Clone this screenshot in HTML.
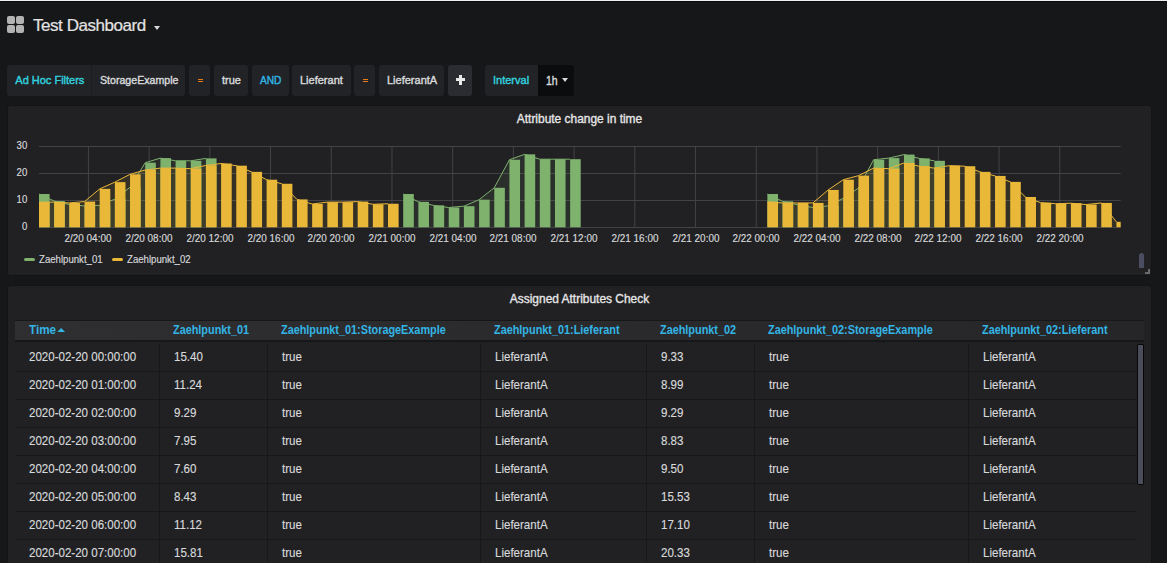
<!DOCTYPE html>
<html><head><meta charset="utf-8"><style>
*{box-sizing:border-box;margin:0;padding:0}
html,body{width:1167px;height:563px;overflow:hidden;background:#161719;font-family:"Liberation Sans",sans-serif;color:#d8d9da}
.topline{position:absolute;left:0;top:0;width:1167px;height:1px;background:#eef0f4}
.topline2{position:absolute;left:0;top:1px;width:1167px;height:1px;background:#0b0c0e}
.icon{position:absolute;left:7px;top:16px;width:17px;height:17px}
.icon i{position:absolute;width:8px;height:8px;background:#b3b3b3;border-radius:2px}
.title{position:absolute;left:33px;top:14px;font-size:17px;line-height:24px;color:#e3e3e3;white-space:nowrap;letter-spacing:-0.45px;-webkit-text-stroke:0.2px #e3e3e3}
.caret{position:absolute;left:153.5px;top:25.5px;width:0;height:0;border-left:3.5px solid transparent;border-right:3.5px solid transparent;border-top:4px solid #d8d9da}
.lbl{position:absolute;top:65px;height:31px;line-height:31px;font-size:11px;padding:0 8px;background:#212327;border-radius:3px;white-space:nowrap;color:#d8d9da;-webkit-text-stroke:0.4px currentColor}
.var{color:#32d1df}
.eq{position:absolute;top:78.7px;width:5.6px;height:3.6px;border-top:1.3px solid #eb7b18;border-bottom:1.3px solid #eb7b18}
.sx{display:inline-block;transform-origin:0 50%}
.kw{color:#33b5e5}
.op{color:#eb7b18}
.panel{position:absolute;left:7px;width:1145px;background:#212124;border:1px solid #141414;border-radius:3px}
.ptitle{position:absolute;left:0;width:100%;text-align:center;font-size:12.5px;color:#e6e6e6;white-space:nowrap;transform:scaleX(0.955);-webkit-text-stroke:0.35px #e6e6e6}
.plot{position:absolute;left:0;top:0}
.xl{position:absolute;top:231.6px;width:80px;text-align:center;font-size:10px;line-height:13px;color:#d8d9da;white-space:nowrap;-webkit-text-stroke:0.15px #d8d9da;transform:scaleX(0.99)}
.yl{position:absolute;left:0;width:27.3px;text-align:right;font-size:10px;line-height:12px;color:#d8d9da;-webkit-text-stroke:0.15px #d8d9da;transform:scaleX(0.96);transform-origin:100% 50%}
.leg{position:absolute;top:253.1px;font-size:10px;line-height:13px;color:#d8d9da;white-space:nowrap;-webkit-text-stroke:0.15px #d8d9da;transform:scaleX(0.962);transform-origin:0 50%}
.sw{position:absolute;top:257.8px;width:10.5px;height:3.2px;border-radius:1.5px}
.thead{position:absolute;left:15px;top:319.5px;width:1129px;height:22px;background:linear-gradient(135deg,#2f2f32,#262628);border-top:1.5px solid #161719;border-bottom:2px solid #161719}
.th{position:absolute;top:320.5px;line-height:19px;font-size:12px;font-weight:bold;color:#33b5e5;white-space:nowrap;transform:scaleX(0.905);transform-origin:0 50%}
.sortc{display:inline-block;margin-left:1.3px;vertical-align:2px;width:0;height:0;border-left:4px solid transparent;border-right:4px solid transparent;border-bottom:4.5px solid #33b5e5}
.tr{position:absolute;left:0;width:1167px;height:28px}
.td{position:absolute;top:0;line-height:27px;font-size:12.75px;transform:scaleX(0.905);transform-origin:0 50%;-webkit-text-stroke:0.15px #d8d9da;color:#d8d9da;white-space:nowrap}
.hsep{position:absolute;left:15px;width:1121px;height:1px;background:#18181a}
.vsep{position:absolute;top:343.5px;width:1px;height:230px;background:#18181a}
.sb{position:absolute;left:1137px;top:343.8px;width:7px;height:140.8px;background:#4b4d5a;border:1.2px solid #060607;border-radius:1px}
</style></head><body>
<div class="topline"></div><div class="topline2"></div>
<div class="icon"><i style="left:0;top:0"></i><i style="left:9px;top:0"></i><i style="left:0;top:9px"></i><i style="left:9px;top:9px"></i></div>
<div class="title">Test Dashboard</div>
<div class="caret"></div>

<div class="lbl var" style="left:7.3px;width:84.2px;border-radius:3px 0 0 3px">Ad Hoc Filters</div>
<div class="lbl" style="left:91.5px;width:93.5px;border-radius:0 3px 3px 0"><span class="sx" style="transform:scaleX(0.965)">StorageExample</span></div>
<div style="position:absolute;left:91px;top:65px;width:1px;height:31px;background:#1c1d20"></div>
<div class="lbl op" style="left:189px;width:21px;padding:0"></div><div class="eq" style="left:197.6px"></div>
<div class="lbl" style="left:214px;width:34px">true</div>
<div class="lbl kw" style="left:252px;width:37px"><span class="sx" style="transform:scaleX(0.92)">AND</span></div>
<div class="lbl" style="left:292px;width:59px">Lieferant</div>
<div class="lbl op" style="left:354.3px;width:20.7px;padding:0"></div><div class="eq" style="left:362.7px"></div>
<div class="lbl" style="left:379px;width:65px">LieferantA</div>
<div class="lbl" style="left:448px;width:24px;background:#2b2c31;padding:0"><span style="position:absolute;left:7.5px;top:13.3px;width:9.5px;height:3px;background:#e8e8e8"></span><span style="position:absolute;left:10.75px;top:10px;width:3px;height:9.6px;background:#e8e8e8"></span></div>
<div class="lbl var" style="left:485px;width:53px;border-radius:3px 0 0 3px">Interval</div>
<div class="lbl" style="left:537.8px;width:36px;background:#0b0c0e;border-radius:0 3px 3px 0;font-size:12px"><span class="sx" style="transform:scaleX(0.87) translateY(1px)">1h</span></div>
<div style="position:absolute;left:561.8px;top:78px;width:0;height:0;border-left:3.2px solid transparent;border-right:3.2px solid transparent;border-top:4px solid #d8d9da"></div>

<div class="panel" style="top:105px;height:171px"></div>
<div class="ptitle" style="top:109.5px;left:8px;width:1143px;line-height:18px">Attribute change in time</div>
<svg class="plot" width="1167" height="563" viewBox="0 0 1167 563">
<defs><clipPath id="pc"><rect x="39" y="0" width="1081.7" height="227.5"/></clipPath></defs>
<line x1="39" y1="146.5" x2="1120.7" y2="146.5" stroke="#434346" stroke-width="1"/><line x1="39" y1="173.5" x2="1120.7" y2="173.5" stroke="#434346" stroke-width="1"/><line x1="39" y1="200.5" x2="1120.7" y2="200.5" stroke="#434346" stroke-width="1"/><line x1="39" y1="227.5" x2="1120.7" y2="227.5" stroke="#434346" stroke-width="1"/><line x1="88.43" y1="146.5" x2="88.43" y2="227.5" stroke="#434346" stroke-width="1"/><line x1="149.14" y1="146.5" x2="149.14" y2="227.5" stroke="#434346" stroke-width="1"/><line x1="209.85" y1="146.5" x2="209.85" y2="227.5" stroke="#434346" stroke-width="1"/><line x1="270.56" y1="146.5" x2="270.56" y2="227.5" stroke="#434346" stroke-width="1"/><line x1="331.27" y1="146.5" x2="331.27" y2="227.5" stroke="#434346" stroke-width="1"/><line x1="391.98" y1="146.5" x2="391.98" y2="227.5" stroke="#434346" stroke-width="1"/><line x1="452.69" y1="146.5" x2="452.69" y2="227.5" stroke="#434346" stroke-width="1"/><line x1="513.40" y1="146.5" x2="513.40" y2="227.5" stroke="#434346" stroke-width="1"/><line x1="574.11" y1="146.5" x2="574.11" y2="227.5" stroke="#434346" stroke-width="1"/><line x1="634.82" y1="146.5" x2="634.82" y2="227.5" stroke="#434346" stroke-width="1"/><line x1="695.53" y1="146.5" x2="695.53" y2="227.5" stroke="#434346" stroke-width="1"/><line x1="756.24" y1="146.5" x2="756.24" y2="227.5" stroke="#434346" stroke-width="1"/><line x1="816.95" y1="146.5" x2="816.95" y2="227.5" stroke="#434346" stroke-width="1"/><line x1="877.66" y1="146.5" x2="877.66" y2="227.5" stroke="#434346" stroke-width="1"/><line x1="938.37" y1="146.5" x2="938.37" y2="227.5" stroke="#434346" stroke-width="1"/><line x1="999.08" y1="146.5" x2="999.08" y2="227.5" stroke="#434346" stroke-width="1"/><line x1="1059.79" y1="146.5" x2="1059.79" y2="227.5" stroke="#434346" stroke-width="1"/>
<g clip-path="url(#pc)">
<path d="M39.00,227.5 L39.00,194.02 L54.17,201.04 L69.35,204.55 L84.53,205.90 L99.70,205.36 L114.88,199.15 L130.05,187.27 L145.23,162.70 L160.40,158.11 L175.58,160.81 L190.75,160.81 L205.93,158.38 L205.93,227.5 Z" fill="#7eb26d" fill-opacity="0.1"/>
<path d="M39.00,194.02 L54.17,201.04 L69.35,204.55 L84.53,205.90 L99.70,205.36 L114.88,199.15 L130.05,187.27 L145.23,162.70 L160.40,158.11 L175.58,160.81 L190.75,160.81 L205.93,158.38" fill="none" stroke="#7eb26d" stroke-width="1"/>
<path d="M403.20,227.5 L403.20,194.02 L418.38,201.85 L433.55,205.36 L448.73,207.52 L463.90,206.17 L479.08,199.69 L494.25,187.81 L509.43,159.73 L524.60,154.33 L539.78,159.19 L554.95,159.19 L570.12,159.19 L570.12,227.5 Z" fill="#7eb26d" fill-opacity="0.1"/>
<path d="M403.20,194.02 L418.38,201.85 L433.55,205.36 L448.73,207.52 L463.90,206.17 L479.08,199.69 L494.25,187.81 L509.43,159.73 L524.60,154.33 L539.78,159.19 L554.95,159.19 L570.12,159.19" fill="none" stroke="#7eb26d" stroke-width="1"/>
<path d="M767.40,227.5 L767.40,194.02 L782.58,201.31 L797.75,204.82 L812.93,207.52 L828.10,205.90 L843.28,198.34 L858.45,188.08 L873.62,159.73 L888.80,158.11 L903.98,154.60 L919.15,158.38 L934.33,160.81 L934.33,227.5 Z" fill="#7eb26d" fill-opacity="0.1"/>
<path d="M767.40,194.02 L782.58,201.31 L797.75,204.82 L812.93,207.52 L828.10,205.90 L843.28,198.34 L858.45,188.08 L873.62,159.73 L888.80,158.11 L903.98,154.60 L919.15,158.38 L934.33,160.81" fill="none" stroke="#7eb26d" stroke-width="1"/>
<rect x="39.00" y="194.02" width="10.6" height="33.48" fill="#7eb26d"/>
<rect x="54.17" y="201.04" width="10.6" height="26.46" fill="#7eb26d"/>
<rect x="69.35" y="204.55" width="10.6" height="22.95" fill="#7eb26d"/>
<rect x="84.53" y="205.90" width="10.6" height="21.60" fill="#7eb26d"/>
<rect x="99.70" y="205.36" width="10.6" height="22.14" fill="#7eb26d"/>
<rect x="114.88" y="199.15" width="10.6" height="28.35" fill="#7eb26d"/>
<rect x="130.05" y="187.27" width="10.6" height="40.23" fill="#7eb26d"/>
<rect x="145.23" y="162.70" width="10.6" height="64.80" fill="#7eb26d"/>
<rect x="160.40" y="158.11" width="10.6" height="69.39" fill="#7eb26d"/>
<rect x="175.58" y="160.81" width="10.6" height="66.69" fill="#7eb26d"/>
<rect x="190.75" y="160.81" width="10.6" height="66.69" fill="#7eb26d"/>
<rect x="205.93" y="158.38" width="10.6" height="69.12" fill="#7eb26d"/>
<rect x="403.20" y="194.02" width="10.6" height="33.48" fill="#7eb26d"/>
<rect x="418.38" y="201.85" width="10.6" height="25.65" fill="#7eb26d"/>
<rect x="433.55" y="205.36" width="10.6" height="22.14" fill="#7eb26d"/>
<rect x="448.73" y="207.52" width="10.6" height="19.98" fill="#7eb26d"/>
<rect x="463.90" y="206.17" width="10.6" height="21.33" fill="#7eb26d"/>
<rect x="479.08" y="199.69" width="10.6" height="27.81" fill="#7eb26d"/>
<rect x="494.25" y="187.81" width="10.6" height="39.69" fill="#7eb26d"/>
<rect x="509.43" y="159.73" width="10.6" height="67.77" fill="#7eb26d"/>
<rect x="524.60" y="154.33" width="10.6" height="73.17" fill="#7eb26d"/>
<rect x="539.78" y="159.19" width="10.6" height="68.31" fill="#7eb26d"/>
<rect x="554.95" y="159.19" width="10.6" height="68.31" fill="#7eb26d"/>
<rect x="570.12" y="159.19" width="10.6" height="68.31" fill="#7eb26d"/>
<rect x="767.40" y="194.02" width="10.6" height="33.48" fill="#7eb26d"/>
<rect x="782.58" y="201.31" width="10.6" height="26.19" fill="#7eb26d"/>
<rect x="797.75" y="204.82" width="10.6" height="22.68" fill="#7eb26d"/>
<rect x="812.93" y="207.52" width="10.6" height="19.98" fill="#7eb26d"/>
<rect x="828.10" y="205.90" width="10.6" height="21.60" fill="#7eb26d"/>
<rect x="843.28" y="198.34" width="10.6" height="29.16" fill="#7eb26d"/>
<rect x="858.45" y="188.08" width="10.6" height="39.42" fill="#7eb26d"/>
<rect x="873.62" y="159.73" width="10.6" height="67.77" fill="#7eb26d"/>
<rect x="888.80" y="158.11" width="10.6" height="69.39" fill="#7eb26d"/>
<rect x="903.98" y="154.60" width="10.6" height="72.90" fill="#7eb26d"/>
<rect x="919.15" y="158.38" width="10.6" height="69.12" fill="#7eb26d"/>
<rect x="934.33" y="160.81" width="10.6" height="66.69" fill="#7eb26d"/>
<path d="M39.00,227.5 L39.00,202.12 L54.17,202.12 L69.35,202.93 L84.53,201.58 L99.70,188.89 L114.88,182.14 L130.05,174.31 L145.23,169.99 L160.40,168.10 L175.58,168.10 L190.75,168.64 L205.93,165.40 L221.10,163.51 L236.28,165.67 L251.45,171.88 L266.62,179.71 L281.80,183.76 L296.98,199.42 L312.15,204.01 L327.32,202.12 L342.50,202.12 L357.68,201.58 L372.85,204.28 L388.03,203.74 L388.03,227.5 Z" fill="#eab839" fill-opacity="0.1"/>
<path d="M39.00,202.12 L54.17,202.12 L69.35,202.93 L84.53,201.58 L99.70,188.89 L114.88,182.14 L130.05,174.31 L145.23,169.99 L160.40,168.10 L175.58,168.10 L190.75,168.64 L205.93,165.40 L221.10,163.51 L236.28,165.67 L251.45,171.88 L266.62,179.71 L281.80,183.76 L296.98,199.42 L312.15,204.01 L327.32,202.12 L342.50,202.12 L357.68,201.58 L372.85,204.28 L388.03,203.74" fill="none" stroke="#eab839" stroke-width="1"/>
<path d="M767.40,227.5 L767.40,201.85 L782.58,202.93 L797.75,202.93 L812.93,202.93 L828.10,189.97 L843.28,179.71 L858.45,175.66 L873.62,168.10 L888.80,168.64 L903.98,162.97 L919.15,166.21 L934.33,168.10 L949.50,165.67 L964.68,166.21 L979.85,171.88 L995.03,175.93 L1010.20,181.87 L1025.38,196.99 L1040.55,202.66 L1055.72,203.74 L1070.90,203.20 L1086.08,204.55 L1101.25,202.93 L1116.42,221.83 L1116.42,227.5 Z" fill="#eab839" fill-opacity="0.1"/>
<path d="M767.40,201.85 L782.58,202.93 L797.75,202.93 L812.93,202.93 L828.10,189.97 L843.28,179.71 L858.45,175.66 L873.62,168.10 L888.80,168.64 L903.98,162.97 L919.15,166.21 L934.33,168.10 L949.50,165.67 L964.68,166.21 L979.85,171.88 L995.03,175.93 L1010.20,181.87 L1025.38,196.99 L1040.55,202.66 L1055.72,203.74 L1070.90,203.20 L1086.08,204.55 L1101.25,202.93 L1116.42,221.83" fill="none" stroke="#eab839" stroke-width="1"/>
<rect x="39.00" y="202.12" width="10.6" height="25.38" fill="#eab839"/>
<rect x="54.17" y="202.12" width="10.6" height="25.38" fill="#eab839"/>
<rect x="69.35" y="202.93" width="10.6" height="24.57" fill="#eab839"/>
<rect x="84.53" y="201.58" width="10.6" height="25.92" fill="#eab839"/>
<rect x="99.70" y="188.89" width="10.6" height="38.61" fill="#eab839"/>
<rect x="114.88" y="182.14" width="10.6" height="45.36" fill="#eab839"/>
<rect x="130.05" y="174.31" width="10.6" height="53.19" fill="#eab839"/>
<rect x="145.23" y="169.99" width="10.6" height="57.51" fill="#eab839"/>
<rect x="160.40" y="168.10" width="10.6" height="59.40" fill="#eab839"/>
<rect x="175.58" y="168.10" width="10.6" height="59.40" fill="#eab839"/>
<rect x="190.75" y="168.64" width="10.6" height="58.86" fill="#eab839"/>
<rect x="205.93" y="165.40" width="10.6" height="62.10" fill="#eab839"/>
<rect x="221.10" y="163.51" width="10.6" height="63.99" fill="#eab839"/>
<rect x="236.28" y="165.67" width="10.6" height="61.83" fill="#eab839"/>
<rect x="251.45" y="171.88" width="10.6" height="55.62" fill="#eab839"/>
<rect x="266.62" y="179.71" width="10.6" height="47.79" fill="#eab839"/>
<rect x="281.80" y="183.76" width="10.6" height="43.74" fill="#eab839"/>
<rect x="296.98" y="199.42" width="10.6" height="28.08" fill="#eab839"/>
<rect x="312.15" y="204.01" width="10.6" height="23.49" fill="#eab839"/>
<rect x="327.32" y="202.12" width="10.6" height="25.38" fill="#eab839"/>
<rect x="342.50" y="202.12" width="10.6" height="25.38" fill="#eab839"/>
<rect x="357.68" y="201.58" width="10.6" height="25.92" fill="#eab839"/>
<rect x="372.85" y="204.28" width="10.6" height="23.22" fill="#eab839"/>
<rect x="388.03" y="203.74" width="10.6" height="23.76" fill="#eab839"/>
<rect x="767.40" y="201.85" width="10.6" height="25.65" fill="#eab839"/>
<rect x="782.58" y="202.93" width="10.6" height="24.57" fill="#eab839"/>
<rect x="797.75" y="202.93" width="10.6" height="24.57" fill="#eab839"/>
<rect x="812.93" y="202.93" width="10.6" height="24.57" fill="#eab839"/>
<rect x="828.10" y="189.97" width="10.6" height="37.53" fill="#eab839"/>
<rect x="843.28" y="179.71" width="10.6" height="47.79" fill="#eab839"/>
<rect x="858.45" y="175.66" width="10.6" height="51.84" fill="#eab839"/>
<rect x="873.62" y="168.10" width="10.6" height="59.40" fill="#eab839"/>
<rect x="888.80" y="168.64" width="10.6" height="58.86" fill="#eab839"/>
<rect x="903.98" y="162.97" width="10.6" height="64.53" fill="#eab839"/>
<rect x="919.15" y="166.21" width="10.6" height="61.29" fill="#eab839"/>
<rect x="934.33" y="168.10" width="10.6" height="59.40" fill="#eab839"/>
<rect x="949.50" y="165.67" width="10.6" height="61.83" fill="#eab839"/>
<rect x="964.68" y="166.21" width="10.6" height="61.29" fill="#eab839"/>
<rect x="979.85" y="171.88" width="10.6" height="55.62" fill="#eab839"/>
<rect x="995.03" y="175.93" width="10.6" height="51.57" fill="#eab839"/>
<rect x="1010.20" y="181.87" width="10.6" height="45.63" fill="#eab839"/>
<rect x="1025.38" y="196.99" width="10.6" height="30.51" fill="#eab839"/>
<rect x="1040.55" y="202.66" width="10.6" height="24.84" fill="#eab839"/>
<rect x="1055.72" y="203.74" width="10.6" height="23.76" fill="#eab839"/>
<rect x="1070.90" y="203.20" width="10.6" height="24.30" fill="#eab839"/>
<rect x="1086.08" y="204.55" width="10.6" height="22.95" fill="#eab839"/>
<rect x="1101.25" y="202.93" width="10.6" height="24.57" fill="#eab839"/>
<rect x="1116.42" y="221.83" width="10.6" height="5.67" fill="#eab839"/>
</g>
</svg>
<div class="yl" style="top:221.2px">0</div><div class="yl" style="top:194.2px">10</div><div class="yl" style="top:167.2px">20</div><div class="yl" style="top:140.2px">30</div>
<div class="xl" style="left:48.43px">2/20 04:00</div><div class="xl" style="left:109.14px">2/20 08:00</div><div class="xl" style="left:169.85px">2/20 12:00</div><div class="xl" style="left:230.56px">2/20 16:00</div><div class="xl" style="left:291.27px">2/20 20:00</div><div class="xl" style="left:351.98px">2/21 00:00</div><div class="xl" style="left:412.69px">2/21 04:00</div><div class="xl" style="left:473.40px">2/21 08:00</div><div class="xl" style="left:534.11px">2/21 12:00</div><div class="xl" style="left:594.82px">2/21 16:00</div><div class="xl" style="left:655.53px">2/21 20:00</div><div class="xl" style="left:716.24px">2/22 00:00</div><div class="xl" style="left:776.95px">2/22 04:00</div><div class="xl" style="left:837.66px">2/22 08:00</div><div class="xl" style="left:898.37px">2/22 12:00</div><div class="xl" style="left:959.08px">2/22 16:00</div><div class="xl" style="left:1019.79px">2/22 20:00</div>
<div class="sw" style="left:24.2px;background:#7eb26d"></div>
<div class="leg" style="left:38.8px">Zaehlpunkt_01</div>
<div class="sw" style="left:112px;background:#eab839"></div>
<div class="leg" style="left:127px">Zaehlpunkt_02</div>
<div style="position:absolute;left:1139px;top:253px;width:5px;height:15px;background:#4b4e60;border-radius:2.5px 2.5px 0 0"></div>
<div style="position:absolute;left:1145px;top:272px;width:5px;height:2px;background:#6a6a6a"></div>
<div style="position:absolute;left:1148px;top:269px;width:2px;height:5px;background:#6a6a6a"></div>

<div class="panel" style="top:285px;height:290px"></div>
<div class="hsep" style="top:370.55px"></div><div class="hsep" style="top:398.60px"></div><div class="hsep" style="top:426.65px"></div><div class="hsep" style="top:454.70px"></div><div class="hsep" style="top:482.75px"></div><div class="hsep" style="top:510.80px"></div><div class="hsep" style="top:538.85px"></div>
<div class="vsep" style="left:159.0px"></div><div class="vsep" style="left:267.0px"></div><div class="vsep" style="left:480.2px"></div><div class="vsep" style="left:646.2px"></div><div class="vsep" style="left:754.1px"></div><div class="vsep" style="left:968.3px"></div>
<div class="ptitle" style="top:289.5px;left:8px;width:1143px;line-height:18px">Assigned Attributes Check</div>
<div class="thead"></div>
<div class="th" style="left:29.2px;transform:scaleX(0.975)">Time<span class=sortc></span></div><div class="th" style="left:172.7px">Zaehlpunkt_01</div><div class="th" style="left:280.7px">Zaehlpunkt_01:StorageExample</div><div class="th" style="left:493.9px">Zaehlpunkt_01:Lieferant</div><div class="th" style="left:659.9px">Zaehlpunkt_02</div><div class="th" style="left:767.8px">Zaehlpunkt_02:StorageExample</div><div class="th" style="left:982.0px">Zaehlpunkt_02:Lieferant</div>
<div class="tr" style="top:343.00px"><div class="td" style="left:29.2px">2020-02-20 00:00:00</div><div class="td" style="left:173.7px">15.40</div><div class="td" style="left:281.7px">true</div><div class="td" style="left:494.9px">LieferantA</div><div class="td" style="left:660.9px">9.33</div><div class="td" style="left:768.8px">true</div><div class="td" style="left:983.0px">LieferantA</div></div><div class="tr" style="top:371.05px"><div class="td" style="left:29.2px">2020-02-20 01:00:00</div><div class="td" style="left:173.7px">11.24</div><div class="td" style="left:281.7px">true</div><div class="td" style="left:494.9px">LieferantA</div><div class="td" style="left:660.9px">8.99</div><div class="td" style="left:768.8px">true</div><div class="td" style="left:983.0px">LieferantA</div></div><div class="tr" style="top:399.10px"><div class="td" style="left:29.2px">2020-02-20 02:00:00</div><div class="td" style="left:173.7px">9.29</div><div class="td" style="left:281.7px">true</div><div class="td" style="left:494.9px">LieferantA</div><div class="td" style="left:660.9px">9.29</div><div class="td" style="left:768.8px">true</div><div class="td" style="left:983.0px">LieferantA</div></div><div class="tr" style="top:427.15px"><div class="td" style="left:29.2px">2020-02-20 03:00:00</div><div class="td" style="left:173.7px">7.95</div><div class="td" style="left:281.7px">true</div><div class="td" style="left:494.9px">LieferantA</div><div class="td" style="left:660.9px">8.83</div><div class="td" style="left:768.8px">true</div><div class="td" style="left:983.0px">LieferantA</div></div><div class="tr" style="top:455.20px"><div class="td" style="left:29.2px">2020-02-20 04:00:00</div><div class="td" style="left:173.7px">7.60</div><div class="td" style="left:281.7px">true</div><div class="td" style="left:494.9px">LieferantA</div><div class="td" style="left:660.9px">9.50</div><div class="td" style="left:768.8px">true</div><div class="td" style="left:983.0px">LieferantA</div></div><div class="tr" style="top:483.25px"><div class="td" style="left:29.2px">2020-02-20 05:00:00</div><div class="td" style="left:173.7px">8.43</div><div class="td" style="left:281.7px">true</div><div class="td" style="left:494.9px">LieferantA</div><div class="td" style="left:660.9px">15.53</div><div class="td" style="left:768.8px">true</div><div class="td" style="left:983.0px">LieferantA</div></div><div class="tr" style="top:511.30px"><div class="td" style="left:29.2px">2020-02-20 06:00:00</div><div class="td" style="left:173.7px">11.12</div><div class="td" style="left:281.7px">true</div><div class="td" style="left:494.9px">LieferantA</div><div class="td" style="left:660.9px">17.10</div><div class="td" style="left:768.8px">true</div><div class="td" style="left:983.0px">LieferantA</div></div><div class="tr" style="top:539.35px"><div class="td" style="left:29.2px">2020-02-20 07:00:00</div><div class="td" style="left:173.7px">15.81</div><div class="td" style="left:281.7px">true</div><div class="td" style="left:494.9px">LieferantA</div><div class="td" style="left:660.9px">20.33</div><div class="td" style="left:768.8px">true</div><div class="td" style="left:983.0px">LieferantA</div></div>
<div class="sb"></div>
</body></html>
